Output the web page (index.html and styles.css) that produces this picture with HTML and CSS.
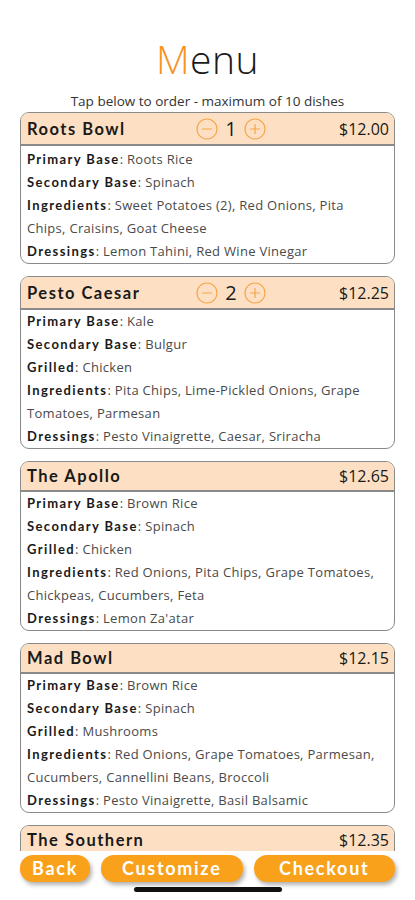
FILE: index.html
```html
<!DOCTYPE html>
<html>
<head>
<meta charset="utf-8">
<link rel="stylesheet" href="styles.css">
</head>
<body>
<div class="screen">
  <header class="top">
    <h1 class="title"><span class="accent">M</span>enu</h1>
    <p class="subtitle">Tap below to order - maximum of 10 dishes</p>
  </header>
  <div class="list">
    <div class="card card-first">
      <div class="card-head head-qty">
        <span class="name">Roots Bowl</span>
        <div class="qty">
          <svg class="qbtn" viewBox="0 0 22 22"><circle cx="11" cy="11" r="10" /><line x1="6" y1="11" x2="16" y2="11" /></svg>
          <span class="count">1</span>
          <svg class="qbtn" viewBox="0 0 22 22"><circle cx="11" cy="11" r="10" /><line x1="6" y1="11" x2="16" y2="11" /><line x1="11" y1="6" x2="11" y2="16" /></svg>
        </div>
        <span class="price">$12.00</span>
      </div>
      <div class="card-body">
        <p class="row"><b>Primary Base</b>: Roots Rice</p>
        <p class="row"><b>Secondary Base</b>: Spinach</p>
        <p class="row"><b>Ingredients</b>: Sweet Potatoes (2), Red Onions, Pita Chips, Craisins, Goat Cheese</p>
        <p class="row"><b>Dressings</b>: Lemon Tahini, Red Wine Vinegar</p>
      </div>
    </div>
    <div class="card">
      <div class="card-head head-qty">
        <span class="name">Pesto Caesar</span>
        <div class="qty">
          <svg class="qbtn" viewBox="0 0 22 22"><circle cx="11" cy="11" r="10" /><line x1="6" y1="11" x2="16" y2="11" /></svg>
          <span class="count">2</span>
          <svg class="qbtn" viewBox="0 0 22 22"><circle cx="11" cy="11" r="10" /><line x1="6" y1="11" x2="16" y2="11" /><line x1="11" y1="6" x2="11" y2="16" /></svg>
        </div>
        <span class="price">$12.25</span>
      </div>
      <div class="card-body">
        <p class="row"><b>Primary Base</b>: Kale</p>
        <p class="row"><b>Secondary Base</b>: Bulgur</p>
        <p class="row"><b>Grilled</b>: Chicken</p>
        <p class="row"><b>Ingredients</b>: Pita Chips, Lime-Pickled Onions, Grape Tomatoes, Parmesan</p>
        <p class="row"><b>Dressings</b>: Pesto Vinaigrette, Caesar, Sriracha</p>
      </div>
    </div>
    <div class="card">
      <div class="card-head">
        <span class="name">The Apollo</span>
        <span class="price">$12.65</span>
      </div>
      <div class="card-body">
        <p class="row"><b>Primary Base</b>: Brown Rice</p>
        <p class="row"><b>Secondary Base</b>: Spinach</p>
        <p class="row"><b>Grilled</b>: Chicken</p>
        <p class="row"><b>Ingredients</b>: Red Onions, Pita Chips, Grape Tomatoes, Chickpeas, Cucumbers, Feta</p>
        <p class="row"><b>Dressings</b>: Lemon Za'atar</p>
      </div>
    </div>
    <div class="card">
      <div class="card-head">
        <span class="name">Mad Bowl</span>
        <span class="price">$12.15</span>
      </div>
      <div class="card-body">
        <p class="row"><b>Primary Base</b>: Brown Rice</p>
        <p class="row"><b>Secondary Base</b>: Spinach</p>
        <p class="row"><b>Grilled</b>: Mushrooms</p>
        <p class="row"><b>Ingredients</b>: Red Onions, Grape Tomatoes, Parmesan, Cucumbers, Cannellini Beans, Broccoli</p>
        <p class="row"><b>Dressings</b>: Pesto Vinaigrette, Basil Balsamic</p>
      </div>
    </div>
    <div class="card">
      <div class="card-head">
        <span class="name">The Southern</span>
        <span class="price">$12.35</span>
      </div>
      <div class="card-body">
        <p class="row"><b>Primary Base</b>: Brown Rice</p>
      </div>
    </div>
  </div>
  <nav class="actions">
    <button class="btn btn-back">Back</button>
    <button class="btn btn-wide">Customize</button>
    <button class="btn btn-wide">Checkout</button>
  </nav>
  <div class="home-bar"></div>
</div>
</body>
</html>
```

FILE: styles.css
```css
* { box-sizing: border-box; }
html, body { margin: 0; padding: 0; background: #fff; }
.screen {
  width: 415px;
  height: 900px;
  overflow: hidden;
  display: flex;
  flex-direction: column;
  align-items: center;
}
.top {
  width: 100%;
  text-align: center;
  padding-top: 35px;
}
.title {
  margin: 0;
  font-family: "Open Sans", sans-serif;
  font-weight: 300;
  font-size: 39px;
  line-height: 48px;
  color: #1a1a1a;
  letter-spacing: 0.5px;
}
.accent { color: #f7931e; }
.subtitle {
  margin: 10px 0 0;
  font-family: "Open Sans", sans-serif;
  font-size: 13.5px;
  line-height: 16px;
  color: #333;
  letter-spacing: 0;
}
.list {
  margin-top: 3px;
  width: 375px;
  height: 739px;
  overflow: hidden;
  display: flex;
  flex-direction: column;
  gap: 12px;
  flex-shrink: 0;
}
.card {
  border: 1px solid #8a8a8a;
  border-radius: 9px;
  overflow: hidden;
  flex-shrink: 0;
  background: #fff;
}
.card-head {
  background: #fde0c3;
  border-bottom: 2px solid #8a8a8a;
  height: 30px;
  display: flex;
  align-items: center;
  padding: 0 5px 0 6px;
  position: relative;
}
.head-qty { height: 33px; }
.card-first .card-body { padding-top: 2px; }
.name {
  font-family: "Lato", sans-serif;
  font-weight: 700;
  font-size: 16.5px;
  letter-spacing: 1.5px;
  color: #1a1a1a;
  flex: 1;
}
.qty {
  position: absolute;
  left: 175px;
  top: 5px;
  display: flex;
  align-items: center;
  gap: 6px;
}
.qbtn {
  width: 22px;
  height: 22px;
  fill: none;
  stroke: #f5a54a;
  stroke-width: 1.2;
}
.count {
  font-family: "Open Sans", sans-serif;
  font-size: 20px;
  line-height: 22px;
  color: #1a1a1a;
  width: 14px;
  text-align: center;
}
.price {
  font-family: "Open Sans", sans-serif;
  font-size: 16px;
  color: #1a1a1a;
}
.card-body {
  padding: 0 14px 0 6px;
}
.row {
  margin: 0;
  font-family: "Open Sans", sans-serif;
  font-size: 13px;
  line-height: 23px;
  color: #4a4a4a;
  letter-spacing: 0.3px;
}
.row b {
  font-family: "Lato", sans-serif;
  font-weight: 700;
  font-size: 13px;
  letter-spacing: 1.4px;
  color: #1a1a1a;
}
.actions {
  width: 375px;
  margin-top: 4px;
  display: flex;
  gap: 11px;
  flex-shrink: 0;
}
.btn {
  height: 27px;
  border: none;
  border-radius: 13px;
  background: #f9a11b;
  color: #fff;
  font-family: "Lato", sans-serif;
  font-weight: 700;
  font-size: 18px;
  line-height: 27px;
  letter-spacing: 1.7px;
  padding: 0;
  box-shadow: 2px 3px 4px rgba(0,0,0,0.3);
}
.btn-back { width: 70px; }
.btn-wide { flex: 1; }
.home-bar {
  margin-top: 5px;
  width: 148px;
  height: 5px;
  border-radius: 3px;
  background: #111;
  flex-shrink: 0;
}
```
